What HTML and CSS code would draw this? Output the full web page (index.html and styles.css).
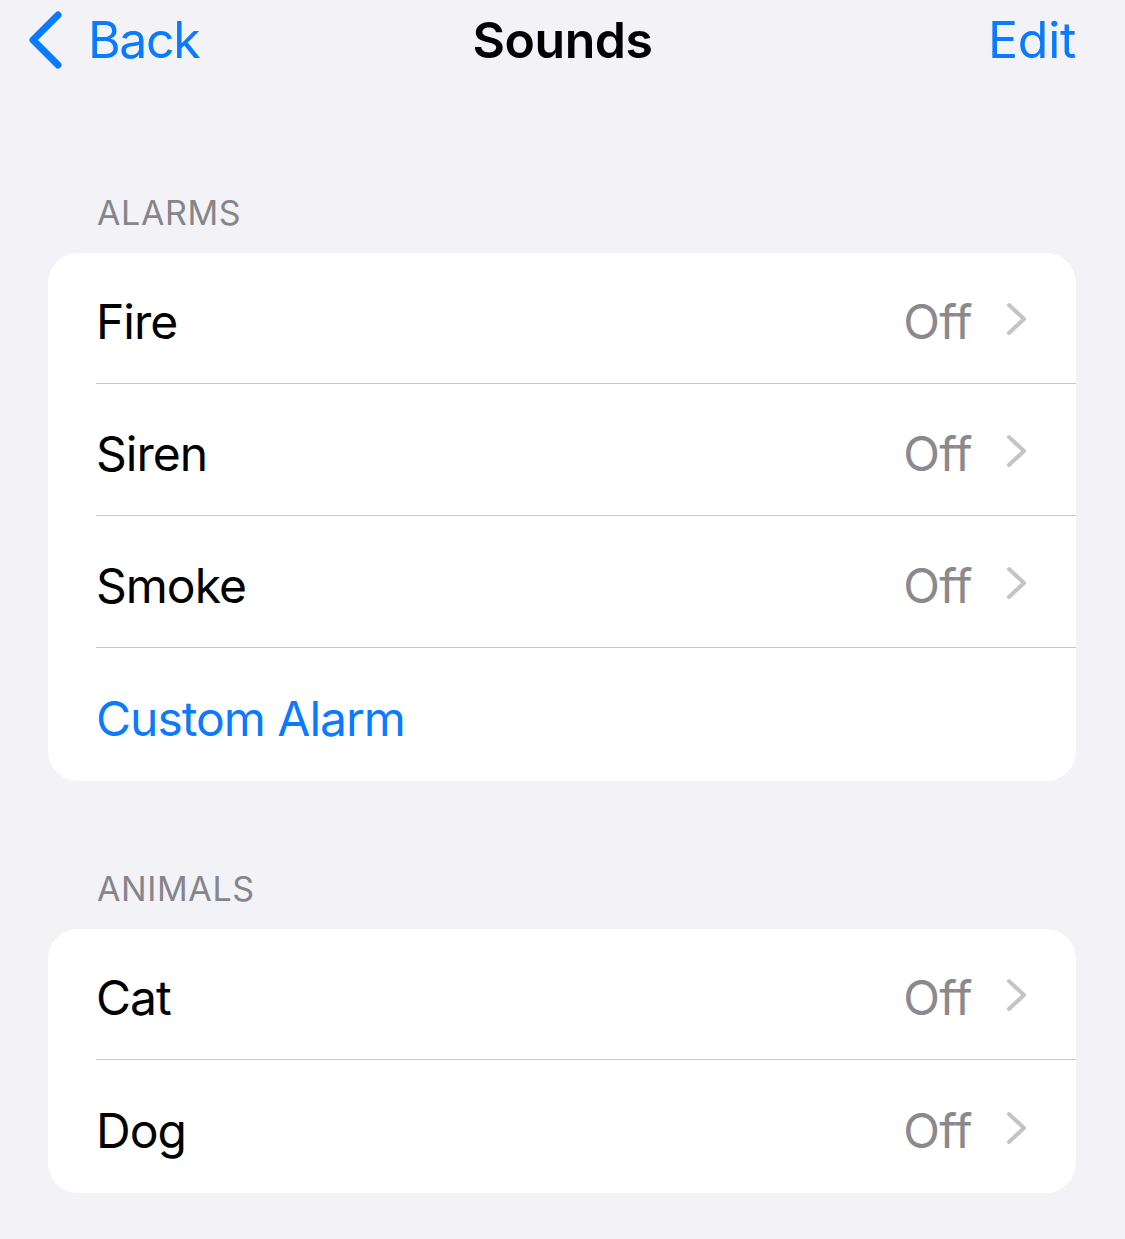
FILE: index.html
```html
<!DOCTYPE html>
<html>
<head>
<meta charset="utf-8">
<link rel="stylesheet" href="styles.css">
</head>
<body>
<header class="nav">
  <div class="nav-left">
    <svg class="back-icon" width="36" height="58" viewBox="0 0 36 58"><path d="M31 4 L6 29 L31 54" fill="none" stroke="#0a7aff" stroke-width="7" stroke-linecap="round" stroke-linejoin="round"/></svg>
    <span class="nav-link back-text">Back</span>
  </div>
  <div class="nav-title">Sounds</div>
  <div class="nav-right"><span class="nav-link">Edit</span></div>
</header>

<section class="group group-first">
  <div class="group-header">ALARMS</div>
  <div class="card">
    <div class="row"><div class="row-inner"><span class="label">Fire</span><span class="value">Off</span><svg class="chev" width="24" height="34" viewBox="0 0 24 34"><path d="M4 3 L19 17 L4 31" fill="none" stroke="#c4c4c7" stroke-width="4" stroke-linecap="round" stroke-linejoin="round"/></svg></div></div>
    <div class="row"><div class="row-inner"><span class="label">Siren</span><span class="value">Off</span><svg class="chev" width="24" height="34" viewBox="0 0 24 34"><path d="M4 3 L19 17 L4 31" fill="none" stroke="#c4c4c7" stroke-width="4" stroke-linecap="round" stroke-linejoin="round"/></svg></div></div>
    <div class="row"><div class="row-inner"><span class="label">Smoke</span><span class="value">Off</span><svg class="chev" width="24" height="34" viewBox="0 0 24 34"><path d="M4 3 L19 17 L4 31" fill="none" stroke="#c4c4c7" stroke-width="4" stroke-linecap="round" stroke-linejoin="round"/></svg></div></div>
    <div class="row"><div class="row-inner last"><span class="label action">Custom Alarm</span></div></div>
  </div>
</section>

<section class="group group-second">
  <div class="group-header">ANIMALS</div>
  <div class="card">
    <div class="row"><div class="row-inner"><span class="label">Cat</span><span class="value">Off</span><svg class="chev" width="24" height="34" viewBox="0 0 24 34"><path d="M4 3 L19 17 L4 31" fill="none" stroke="#c4c4c7" stroke-width="4" stroke-linecap="round" stroke-linejoin="round"/></svg></div></div>
    <div class="row"><div class="row-inner last"><span class="label">Dog</span><span class="value">Off</span><svg class="chev" width="24" height="34" viewBox="0 0 24 34"><path d="M4 3 L19 17 L4 31" fill="none" stroke="#c4c4c7" stroke-width="4" stroke-linecap="round" stroke-linejoin="round"/></svg></div></div>
  </div>
</section>
</body>
</html>
```

FILE: styles.css
```css
html, body {
  margin: 0;
  padding: 0;
}
body {
  background: #f2f2f7;
  font-family: Inter, "Noto Sans", "Liberation Sans", sans-serif;
  color: #000;
  width: 1125px;
  height: 1239px;
  overflow: hidden;
}
.nav {
  display: grid;
  grid-template-columns: 1fr auto 1fr;
  align-items: center;
  height: 80px;
  padding: 0 49px;
}
.nav-left {
  display: flex;
  align-items: center;
  gap: 25px;
  margin-left: -22px;
}
.back-icon {
  display: block;
}
.nav-link {
  color: #0a7aff;
  font-size: 50px;
  letter-spacing: -0.3px;
}
.back-text {
  letter-spacing: -1.4px;
}
.nav-title {
  font-size: 50px;
  font-weight: 600;
  letter-spacing: -0.5px;
}
.nav-right {
  display: flex;
  justify-content: flex-end;
}
.group-first {
  margin-top: 113px;
}
.group-second {
  margin-top: 88px;
}
.group-header {
  padding-left: 97px;
  font-size: 34px;
  color: #85858a;
  letter-spacing: 0.6px;
  line-height: 40px;
  margin-bottom: 20px;
}
.card {
  margin: 0 49px 0 48px;
  background: #fff;
  border-radius: 30px;
  overflow: hidden;
}
.row {
  padding-left: 48px;
  height: 132px;
}
.row-inner {
  box-sizing: border-box;
  height: 131px;
  padding-top: 6px;
  display: flex;
  align-items: center;
  border-bottom: 1px solid #c8c8cc;
  padding-right: 47px;
}
.row-inner.last {
  border-bottom: none;
  height: 132px;
}
.label {
  flex: 1;
  font-size: 48px;
  padding-left: 0;
  letter-spacing: -1px;
}
.label.action {
  color: #0a7aff;
}
.value {
  font-size: 48px;
  color: #8a8a8e;
  margin-right: 33px;
  letter-spacing: -0.5px;
}
.chev {
  display: block;
  margin-top: -5px;
}
```
